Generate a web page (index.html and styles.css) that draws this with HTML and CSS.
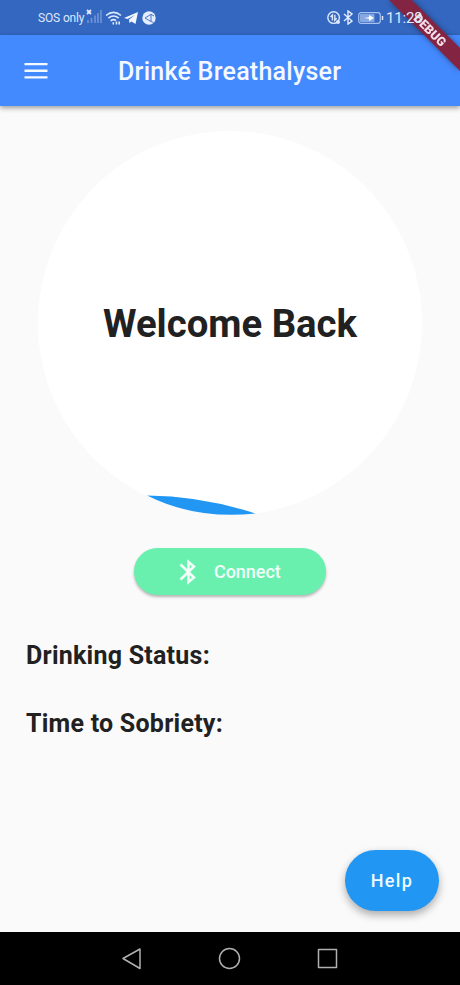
FILE: index.html
```html
<!DOCTYPE html>
<html lang="en">
<head>
<meta charset="utf-8">
<title>Drinké Breathalyser</title>
<link rel="stylesheet" href="styles.css">
</head>
<body>
<div class="screen">
  <div class="status-bar">
    <div class="status-left">
      <span class="carrier">SOS only</span>
      <svg class="signal" width="16" height="16" viewBox="0 0 16 16">
        <path d="M1 2l4 4M5 2L1 6" stroke="#dfeaff" stroke-width="1.800"/>
        <path d="M2 15v-3M5.500 15v-5M9 15V7.500M12 15V5M15 15V2" stroke="#6d92d6" stroke-width="1.700"/>
      </svg>
      <svg class="wifi" width="17" height="16" viewBox="0 0 17 16" fill="none" stroke="#dce9ff" stroke-width="1.600">
        <path d="M1 5.500Q8.500-.8 16 5.500M3.300 8.200Q8.500 3.800 13.700 8.200M5.600 10.800Q8.500 8.600 11 10.600"/>
        <path d="M8.300 12.300v2.200M11.500 11.500v3M14.200 11.500v3"/>
      </svg>
      <svg class="plane" width="14" height="14" viewBox="0 0 14 14" fill="#f1f6ff">
        <path d="M0 7L14 1 11.500 13 7.500 10.500 5.500 12 5 8.500 11 4 3.500 8z"/>
      </svg>
      <svg class="globe" width="14" height="14" viewBox="0 0 14 14">
        <circle cx="7" cy="7" r="6.700" fill="#e3edff"/>
        <path d="M3 7l6-3.700v7.200zM9 3.300l3 1.700M9 10.500l2.500 1" fill="none" stroke="#4777c9" stroke-width="1"/>
      </svg>
    </div>
    <div class="status-right">
      <svg width="14" height="14" viewBox="0 0 14 14" fill="none" stroke="#dce9ff" stroke-width="1.400">
        <circle cx="6.600" cy="6.600" r="5.800"/>
        <path d="M5.400 9.500V4L3.500 6M7.800 3.700v5.500L9.700 7.200"/>
        <circle cx="11" cy="11" r="2" fill="#dce9ff" stroke="none"/>
      </svg>
      <svg class="bt-small" width="10" height="15" viewBox="0 0 10 15" fill="none" stroke="#e3edff" stroke-width="1.400">
        <path d="M1 4l8 7-4 3V1l4 3-8 7"/>
      </svg>
      <svg class="battery" width="26" height="12" viewBox="0 0 26 12">
        <rect x=".7" y=".7" width="21.600" height="10.600" rx="2.500" fill="none" stroke="#a9c2ef" stroke-width="1.200"/>
        <rect x="2" y="2" width="14.500" height="8" rx="1" fill="#86a8e2"/>
        <path d="M6 6l5-.8V3l5 3-5 3V6.800z" fill="#fff"/>
        <path d="M24.500 4v4" stroke="#dce9ff" stroke-width="1.500"/>
      </svg>
      <span class="clock">11:28</span>
    </div>
  </div>

  <header class="app-bar">
    <svg class="menu" width="24" height="18" viewBox="0 0 24 18" fill="#f4f8ff">
      <path d="M.5 1h23v2.300H.5zM.5 7.600h23v2.300H.5zM.5 14.200h23v2.300H.5z"/>
    </svg>
    <h1 class="title">Drinké Breathalyser</h1>
  </header>

  <main class="content">
    <div class="gauge">
      <svg class="wave" width="384" height="384" viewBox="0 0 384 384">
        <path d="M109 364.500Q164 365 217.500 382.500Q158 389 109 364.500z" fill="#2196f3"/>
      </svg>
      <span class="welcome">Welcome Back</span>
    </div>
    <button class="connect">
      <svg width="18" height="26" viewBox="0 0 18 26" fill="none" stroke="#f3fff9" stroke-width="2.500">
        <path d="M1.500 5.500L15 18.500 9.500 23V3L15 7.500 1.500 20.500"/>
      </svg>
      <span>Connect</span>
    </button>
    <section class="readings">
      <p class="drinking">Drinking Status:</p>
      <p class="sobriety">Time to Sobriety:</p>
    </section>
    <button class="help">Help</button>
  </main>

  <nav class="nav-bar">
    <svg width="22" height="24" viewBox="0 0 22 24"><path d="M3 11.500L20 2v19.500z"/></svg>
    <svg width="24" height="24" viewBox="0 0 24 24"><circle cx="12.500" cy="11.500" r="10"/></svg>
    <svg width="22" height="24" viewBox="0 0 22 24"><path d="M2.500 2.500h18v18h-18z"/></svg>
  </nav>

  <svg class="debug-banner" width="76" height="76" viewBox="0 0 76 76">
    <path d="M5 0h23l48 48v23z" fill="#832442"/>
    <text x="46" y="34.500" transform="rotate(45 46 30)" text-anchor="middle">DEBUG</text>
  </svg>
</div>
</body>
</html>
```
FILE: styles.css
```css
* { box-sizing: border-box; }
body {
  margin: 0;
  font-family: Roboto, "Liberation Sans", sans-serif;
}
.screen {
  position: relative;
  display: flex;
  flex-direction: column;
  width: 460px;
  height: 985px;
  overflow: hidden;
  background: #fafafa;
}
.status-bar {
  display: flex;
  justify-content: space-between;
  flex: none;
  height: 35px;
  padding: 0 37px 0 38px;
  background: #3467c0;
  color: #dce9ff;
}
.status-left, .status-right {
  display: flex;
  align-items: center;
  height: 35px;
}
.carrier { font-size: 12px; letter-spacing: -.15px; width: 47px; white-space: nowrap; }
.signal { margin-left: 1px; margin-top: -3px; }
.wifi { margin-left: 3px; }
.plane { margin-left: 2px; }
.globe { margin-left: 4px; }
.bt-small { margin-left: 2px; }
.battery { margin-left: 5px; }
.clock {
  position: relative;
  z-index: 3;
  width: 37px;
  margin-left: 2px;
  font-size: 15px;
  letter-spacing: -.2px;
  white-space: nowrap;
}
.app-bar {
  display: flex;
  align-items: center;
  flex: none;
  height: 71px;
  padding-left: 24px;
  background: #448aff;
  box-shadow: 0 2px 5px rgba(0, 0, 0, .38);
  z-index: 1;
}
.title {
  margin: 2px 0 0 70px;
  font-size: 25px;
  font-weight: 500;
  letter-spacing: .25px;
  color: #f4f8ff;
  white-space: nowrap;
}
.content {
  display: flex;
  flex-direction: column;
  align-items: center;
  flex: none;
  height: 826px;
  padding-top: 25px;
}
.gauge {
  display: grid;
  place-items: center;
  flex: none;
  width: 384px;
  height: 384px;
  border-radius: 50%;
  background: #fff;
}
.wave, .welcome { grid-area: 1 / 1; }
.welcome {
  font-size: 38.3px;
  font-weight: 700;
  color: #212121;
  white-space: nowrap;
}
button { border: 0; padding: 0; font-family: inherit; }
.connect {
  display: flex;
  align-items: center;
  flex: none;
  gap: 17px;
  width: 192px;
  height: 47px;
  margin-top: 33px;
  padding-left: 45px;
  border-radius: 24px;
  background: #69f0ae;
  box-shadow: 0 2px 3px rgba(0, 0, 0, .28);
  color: #f3fff9;
  font-size: 18px;
  font-weight: 500;
  letter-spacing: -.05px;
}
.readings {
  align-self: stretch;
  padding-left: 26px;
  margin-top: 45px;
  font-size: 25px;
  font-weight: 700;
  letter-spacing: .24px;
  color: #212121;
}
.readings p {
  margin: 0 0 36px;
  line-height: 32px;
  white-space: nowrap;
}
.help {
  align-self: flex-end;
  flex: none;
  width: 94px;
  height: 61px;
  margin: auto 21px 21px 0;
  border-radius: 31px;
  background: #2196f3;
  box-shadow: 0 4px 8px rgba(0, 0, 0, .32);
  color: #edfaff;
  font-size: 18px;
  font-weight: 500;
  letter-spacing: 1.4px;
}
.nav-bar {
  display: flex;
  align-items: center;
  justify-content: space-between;
  flex: none;
  height: 53px;
  padding: 0 122px 0 120px;
  background: #000;
}
.nav-bar svg {
  fill: none;
  stroke: #b0b0b0;
  stroke-width: 1.5;
  stroke-linejoin: round;
}
.debug-banner {
  position: absolute;
  top: 0;
  right: 0;
  z-index: 2;
  filter: drop-shadow(0 0 3px rgba(0, 0, 0, .4));
}
.debug-banner text {
  fill: #f3dfe8;
  font-size: 12.5px;
  font-weight: 900;
}
```
